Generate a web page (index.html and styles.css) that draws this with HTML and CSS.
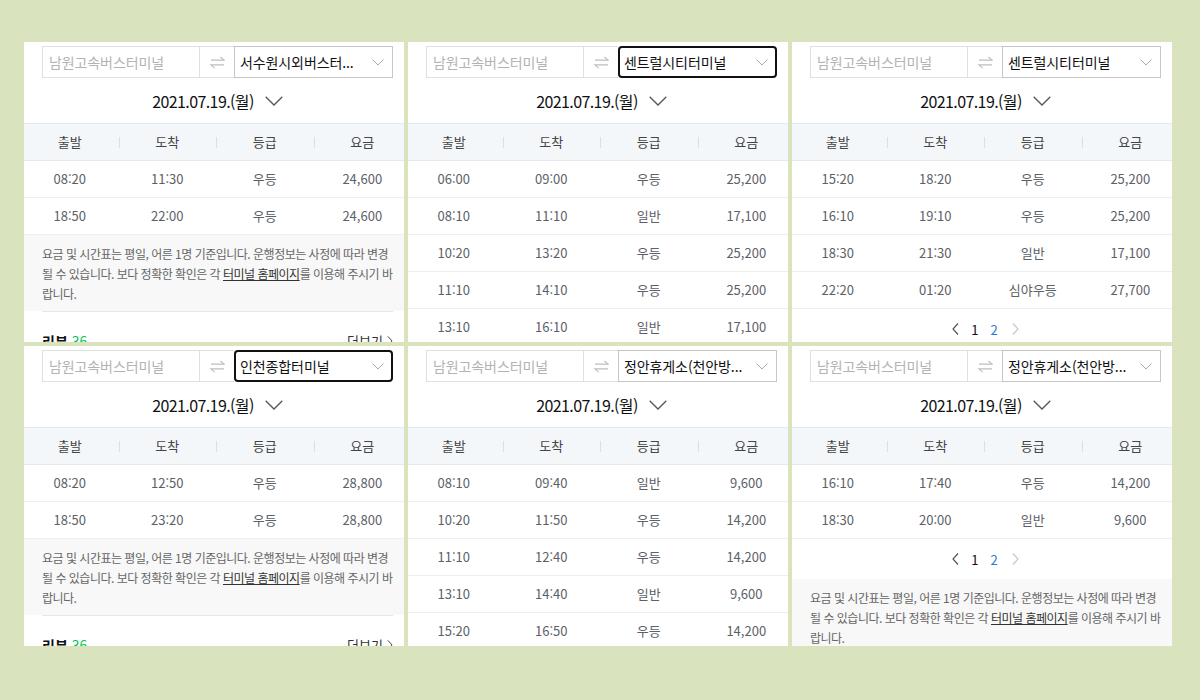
FILE: index.html
```html
<!DOCTYPE html>
<html lang="ko">
<head>
<meta charset="utf-8">
<title>시외버스 시간표</title>
<link rel="stylesheet" href="styles.css">
</head>
<body>
<svg width="0" height="0" class="defs">
  <defs>
    <symbol id="swap" viewBox="0 0 16 14"><path d="M1 4.5H15L11 1M15 9.5H1L5 13" fill="none" stroke="currentColor" stroke-width="1.2"/></symbol>
    <symbol id="chev-s" viewBox="0 0 12 7"><path d="M0.5 0.5L6 6L11.5 0.5" fill="none" stroke="currentColor" stroke-width="1"/></symbol>
    <symbol id="chev-l" viewBox="0 0 18 10"><path d="M0.7 0.7L9 9L17.3 0.7" fill="none" stroke="currentColor" stroke-width="1.3"/></symbol>
    <symbol id="prev" viewBox="0 0 7 12"><path d="M6 0.5L1 6L6 11.5" fill="none" stroke="currentColor" stroke-width="1.2"/></symbol>
    <symbol id="next" viewBox="0 0 7 12"><path d="M1 0.5L6 6L1 11.5" fill="none" stroke="currentColor" stroke-width="1.2"/></symbol>
  </defs>
</svg>
<main class="board">

  <!-- panel 1 -->
  <section class="panel">
    <div class="search">
      <div class="from"><span class="ph">남원고속버스터미널</span><span class="swap"><svg><use href="#swap"/></svg></span></div>
      <div class="to"><span class="val">서수원시외버스터...</span><svg class="chev"><use href="#chev-s"/></svg></div>
    </div>
    <div class="date"><span>2021.07.19.(월)</span><svg class="dchev"><use href="#chev-l"/></svg></div>
    <div class="table">
      <div class="thead"><span>출발</span><span>도착</span><span>등급</span><span>요금</span></div>
      <div class="row"><span>08:20</span><span>11:30</span><span>우등</span><span>24,600</span></div>
      <div class="row"><span>18:50</span><span>22:00</span><span>우등</span><span>24,600</span></div>
    </div>
    <p class="notice">요금 및 시간표는 평일, 어른 1명 기준입니다. 운행정보는 사정에 따라 변경<br>될 수 있습니다. 보다 정확한 확인은 각 <a class="link">터미널 홈페이지</a>를 이용해 주시기 바<br>랍니다.</p>
    <div class="review"><b class="rtitle">리뷰 <em>36</em></b><span class="more">더보기<svg class="mchev"><use href="#next"/></svg></span></div>
  </section>

  <!-- panel 2 -->
  <section class="panel">
    <div class="search">
      <div class="from"><span class="ph">남원고속버스터미널</span><span class="swap"><svg><use href="#swap"/></svg></span></div>
      <div class="to focus"><span class="val">센트럴시티터미널</span><svg class="chev"><use href="#chev-s"/></svg></div>
    </div>
    <div class="date"><span>2021.07.19.(월)</span><svg class="dchev"><use href="#chev-l"/></svg></div>
    <div class="table">
      <div class="thead"><span>출발</span><span>도착</span><span>등급</span><span>요금</span></div>
      <div class="row"><span>06:00</span><span>09:00</span><span>우등</span><span>25,200</span></div>
      <div class="row"><span>08:10</span><span>11:10</span><span>일반</span><span>17,100</span></div>
      <div class="row"><span>10:20</span><span>13:20</span><span>우등</span><span>25,200</span></div>
      <div class="row"><span>11:10</span><span>14:10</span><span>우등</span><span>25,200</span></div>
      <div class="row"><span>13:10</span><span>16:10</span><span>일반</span><span>17,100</span></div>
    </div>
  </section>

  <!-- panel 3 -->
  <section class="panel">
    <div class="search">
      <div class="from"><span class="ph">남원고속버스터미널</span><span class="swap"><svg><use href="#swap"/></svg></span></div>
      <div class="to"><span class="val">센트럴시티터미널</span><svg class="chev"><use href="#chev-s"/></svg></div>
    </div>
    <div class="date"><span>2021.07.19.(월)</span><svg class="dchev"><use href="#chev-l"/></svg></div>
    <div class="table">
      <div class="thead"><span>출발</span><span>도착</span><span>등급</span><span>요금</span></div>
      <div class="row"><span>15:20</span><span>18:20</span><span>우등</span><span>25,200</span></div>
      <div class="row"><span>16:10</span><span>19:10</span><span>우등</span><span>25,200</span></div>
      <div class="row"><span>18:30</span><span>21:30</span><span>일반</span><span>17,100</span></div>
      <div class="row"><span>22:20</span><span>01:20</span><span>심야우등</span><span>27,700</span></div>
    </div>
    <nav class="pager"><svg class="pg prev"><use href="#prev"/></svg><span class="num cur">1</span><span class="num">2</span><svg class="pg next"><use href="#next"/></svg></nav>
  </section>

  <!-- panel 4 -->
  <section class="panel">
    <div class="search">
      <div class="from"><span class="ph">남원고속버스터미널</span><span class="swap"><svg><use href="#swap"/></svg></span></div>
      <div class="to focus"><span class="val">인천종합터미널</span><svg class="chev"><use href="#chev-s"/></svg></div>
    </div>
    <div class="date"><span>2021.07.19.(월)</span><svg class="dchev"><use href="#chev-l"/></svg></div>
    <div class="table">
      <div class="thead"><span>출발</span><span>도착</span><span>등급</span><span>요금</span></div>
      <div class="row"><span>08:20</span><span>12:50</span><span>우등</span><span>28,800</span></div>
      <div class="row"><span>18:50</span><span>23:20</span><span>우등</span><span>28,800</span></div>
    </div>
    <p class="notice">요금 및 시간표는 평일, 어른 1명 기준입니다. 운행정보는 사정에 따라 변경<br>될 수 있습니다. 보다 정확한 확인은 각 <a class="link">터미널 홈페이지</a>를 이용해 주시기 바<br>랍니다.</p>
    <div class="review"><b class="rtitle">리뷰 <em>36</em></b><span class="more">더보기<svg class="mchev"><use href="#next"/></svg></span></div>
  </section>

  <!-- panel 5 -->
  <section class="panel">
    <div class="search">
      <div class="from"><span class="ph">남원고속버스터미널</span><span class="swap"><svg><use href="#swap"/></svg></span></div>
      <div class="to"><span class="val">정안휴게소(천안방...</span><svg class="chev"><use href="#chev-s"/></svg></div>
    </div>
    <div class="date"><span>2021.07.19.(월)</span><svg class="dchev"><use href="#chev-l"/></svg></div>
    <div class="table">
      <div class="thead"><span>출발</span><span>도착</span><span>등급</span><span>요금</span></div>
      <div class="row"><span>08:10</span><span>09:40</span><span>일반</span><span>9,600</span></div>
      <div class="row"><span>10:20</span><span>11:50</span><span>우등</span><span>14,200</span></div>
      <div class="row"><span>11:10</span><span>12:40</span><span>우등</span><span>14,200</span></div>
      <div class="row"><span>13:10</span><span>14:40</span><span>일반</span><span>9,600</span></div>
      <div class="row"><span>15:20</span><span>16:50</span><span>우등</span><span>14,200</span></div>
    </div>
  </section>

  <!-- panel 6 -->
  <section class="panel">
    <div class="search">
      <div class="from"><span class="ph">남원고속버스터미널</span><span class="swap"><svg><use href="#swap"/></svg></span></div>
      <div class="to"><span class="val">정안휴게소(천안방...</span><svg class="chev"><use href="#chev-s"/></svg></div>
    </div>
    <div class="date"><span>2021.07.19.(월)</span><svg class="dchev"><use href="#chev-l"/></svg></div>
    <div class="table">
      <div class="thead"><span>출발</span><span>도착</span><span>등급</span><span>요금</span></div>
      <div class="row"><span>16:10</span><span>17:40</span><span>우등</span><span>14,200</span></div>
      <div class="row"><span>18:30</span><span>20:00</span><span>일반</span><span>9,600</span></div>
    </div>
    <nav class="pager"><svg class="pg prev"><use href="#prev"/></svg><span class="num cur">1</span><span class="num">2</span><svg class="pg next"><use href="#next"/></svg></nav>
    <p class="notice">요금 및 시간표는 평일, 어른 1명 기준입니다. 운행정보는 사정에 따라 변경<br>될 수 있습니다. 보다 정확한 확인은 각 <a class="link">터미널 홈페이지</a>를 이용해 주시기 바<br>랍니다.</p>
  </section>

</main>
</body>
</html>
```

FILE: styles.css
```css
* { box-sizing: border-box; }

html, body {
  margin: 0;
  padding: 0;
}

body {
  width: 1200px;
  height: 700px;
  background: #d9e4be;
  font-family: "Noto Sans CJK KR", "Noto Sans", sans-serif;
  color: #222;
  overflow: hidden;
}

.defs {
  position: absolute;
  width: 0;
  height: 0;
}

.board {
  display: grid;
  grid-template-columns: repeat(3, 380px);
  grid-template-rows: repeat(2, 300px);
  gap: 4px;
  padding: 42px 0 0 24px;
}

.panel {
  background: #fff;
  overflow: hidden;
  display: flex;
  flex-direction: column;
}

/* search bar */
.search {
  display: flex;
  height: 32px;
  margin: 4px 11px 0 18px;
  flex: none;
}

.from {
  width: 192px;
  display: flex;
  border: 1px solid #e0e0e0;
  border-right: none;
}

.ph {
  width: 157px;
  flex: none;
  border-right: 1px solid #e0e0e0;
  padding-left: 6px;
  font-size: 14px;
  letter-spacing: -0.1px;
  line-height: 30px;
  color: #b3b3b3;
  white-space: nowrap;
}

.swap {
  flex: 1;
  display: flex;
  align-items: center;
  justify-content: center;
  color: #bdbdbd;
}

.swap svg {
  width: 15px;
  height: 13px;
}

.to {
  flex: 1;
  min-width: 0;
  display: flex;
  align-items: center;
  border: 1px solid #c6c6c6;
  padding: 0 8px 0 5px;
}

.to.focus {
  border: 2px solid #111;
  border-radius: 4px;
  padding: 0 7px 0 4px;
}

.val {
  flex: 1;
  min-width: 0;
  font-size: 14px;
  letter-spacing: -0.1px;
  color: #111;
  white-space: nowrap;
}

.chev {
  width: 12px;
  height: 7px;
  color: #aaa;
  flex: none;
  margin-left: 8px;
}

/* date */
.date {
  height: 45px;
  flex: none;
  display: flex;
  align-items: center;
  justify-content: center;
  gap: 11px;
  margin: 0 11px 0 18px;
  font-size: 16px;
  letter-spacing: -0.6px;
  color: #111;
}

.dchev {
  width: 18px;
  height: 10px;
  color: #555;
}

/* table */
.table {
  width: 390px;
  margin-left: -3px;
  flex: none;
}

.thead, .row {
  display: flex;
}

.thead > span, .row > span {
  flex: 1;
  text-align: center;
}

.thead {
  height: 38px;
  background: #f4f7fa;
  border-top: 1px solid #e4e9ee;
  border-bottom: 1px solid #e4e9ee;
  font-size: 13px;
  color: #444;
  line-height: 36px;
}

.thead > span {
  position: relative;
}

.thead > span + span::before {
  content: "";
  position: absolute;
  left: 0;
  top: 13px;
  width: 1px;
  height: 11px;
  background: #dcdfe3;
}

.row {
  height: 37px;
  border-bottom: 1px solid #eeeeee;
  font-size: 13px;
  line-height: 36px;
  color: #5c6168;
}

/* notice */
.notice {
  margin: 0;
  flex: none;
  background: #f8f8f8;
  padding: 9px 11px 7px 18px;
  font-size: 12px;
  line-height: 20px;
  color: #666;
  white-space: nowrap;
  letter-spacing: -0.5px;
}

.link {
  color: #333;
  text-decoration: underline;
}

/* review */
.review {
  flex: none;
  margin: 0 11px 0 18px;
  border-top: 1px solid #e6e6e6;
  padding-top: 19px;
  display: flex;
  justify-content: space-between;
  align-items: center;
  line-height: 20px;
}

.rtitle {
  font-size: 14px;
  font-weight: 700;
  color: #111;
}

.rtitle em {
  font-style: normal;
  font-weight: 400;
  color: #03c75a;
}

.more {
  font-size: 13px;
  color: #333;
  display: flex;
  align-items: center;
  gap: 4px;
}

.mchev {
  width: 6px;
  height: 10px;
  color: #444;
}

/* pager */
.pager {
  height: 40px;
  flex: none;
  display: flex;
  align-items: center;
  justify-content: center;
  gap: 12px;
  margin: 0 11px 0 18px;
  font-size: 13px;
}

.pg {
  width: 7px;
  height: 12px;
}

.pg.prev { color: #555; margin-right: 0; }
.pg.next { color: #c8c8c8; margin-left: 2px; }

.num { color: #2b78d8; }
.num.cur { color: #111; }
```
